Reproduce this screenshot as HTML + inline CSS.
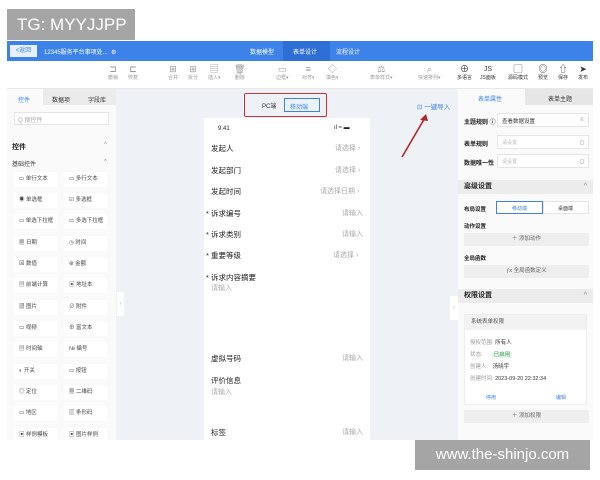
<!DOCTYPE html>
<html><head><meta charset="utf-8"><style>
*{margin:0;padding:0;box-sizing:border-box}
body{width:600px;height:480px;background:#fff;font-family:"Liberation Sans","Noto Sans CJK SC",sans-serif;position:relative;overflow:hidden;color:#333}
.a{position:absolute}
.t{font-size:6px;white-space:nowrap}
.hdr{left:7px;top:41px;width:586px;height:20px;background:#3d82e8}
.tool{left:7px;top:61px;width:586px;height:28px;background:#fff;border-bottom:1px solid #e8e8e8}
.canvas{left:116px;top:89px;width:342px;height:351px;background:#eef1f5}
.lp{left:7px;top:89px;width:109px;height:351px;background:#fafafa}
.rp{left:458px;top:89px;width:135px;height:351px;background:#fafafa}
.item{position:absolute;width:43px;height:15px;background:#fff;font-size:5.5px;color:#444;line-height:15px;padding-left:5px;white-space:nowrap}
.row{font-size:7.5px;color:#222}
.ph{font-size:7px;color:#aaa}
.sec{background:#ececec;height:14px;font-size:7px;font-weight:bold;line-height:14px;padding-left:6px;color:#222}
.btn{background:#eee;height:13px;font-size:5.5px;color:#666;text-align:center;line-height:13px}
.tb span{position:absolute;text-align:center;line-height:9px}
.tb b{font-weight:normal;font-size:9px;display:block}
</style></head><body>
<div class="a" style="left:7px;top:9px;width:128px;height:31px;background:#a5a5a5;color:#fff;font-size:17px;line-height:31px;padding-left:10px">TG: MYYJJPP</div>

<div class="a hdr"></div>
<div class="a t" style="left:10px;top:45px;width:27px;height:12px;background:#e8f0fc;color:#3d82e8;line-height:12px;text-align:center">&lt;返回</div>
<div class="a t" style="left:44px;top:47px;color:#fff">12345服务平台事项处...&nbsp; ⚙</div>
<div class="a t" style="left:250px;top:47px;color:#fff">数据模型</div>
<div class="a" style="left:283px;top:41px;width:47px;height:20px;background:#2e6fd6"></div>
<div class="a t" style="left:293px;top:47px;color:#fff">表单设计</div>
<div class="a t" style="left:336px;top:47px;color:#fff">流程设计</div>

<div class="a tool"></div>
<div class="a tb" style="font-size:5px;color:#999;top:65px;left:0;width:600px;height:22px">
<span style="left:108px"><b>⊐</b>撤销</span><span style="left:128px"><b>⊏</b>恢复</span>
<span style="left:168px"><b>⊞</b>合并</span><span style="left:188px"><b>⊞</b>拆分</span>
<span style="left:208px"><b>▤</b>插入▾</span><span style="left:234px"><b>🗑</b>删除</span>
<span style="left:276px"><b>▭</b>边框▾</span><span style="left:302px"><b>≡</b>对齐▾</span><span style="left:326px"><b>◇</b>填色▾</span>
<span style="left:370px"><b>⚖</b>表单样式▾</span><span style="left:418px"><b>⌕</b>快速排列▾</span>
<span style="left:457px;color:#333"><b>⊕</b>多语言</span><span style="left:480px;color:#333"><b style="font-size:7px">JS</b>JS面板</span>
<span style="left:508px;color:#333"><b>▢</b>源码模式</span><span style="left:538px;color:#333"><b>◎</b>预览</span>
<span style="left:558px;color:#333"><b>⇧</b>保存</span><span style="left:578px;color:#333"><b>➤</b>发布</span>
</div>

<div class="a canvas"></div>
<div class="a lp"></div>
<div class="a" style="left:7px;top:89px;width:109px;height:16px;background:#fafafa"></div>
<div class="a" style="left:43px;top:89px;width:73px;height:16px;background:#ebebeb"></div>
<div class="a t" style="left:18px;top:95px;color:#3d82e8">控件</div>
<div class="a t" style="left:52px;top:95px">数据项</div>
<div class="a t" style="left:88px;top:95px">字段库</div>
<div class="a" style="left:14px;top:112px;width:95px;height:13px;background:#fff;border:1px solid #e5e5e5"></div>
<div class="a t" style="left:18px;top:115px;color:#aaa">Q 搜控件</div>
<div class="a t" style="left:12px;top:142px;font-weight:bold;font-size:7px;color:#222">控件</div>
<div class="a t" style="left:104px;top:142px;color:#888">^</div>
<div class="a t" style="left:12px;top:159px;color:#444">基础控件</div>
<div class="a t" style="left:104px;top:159px;color:#888">^</div>
<div class="a" style="left:0;top:0">
<div class="item" style="left:14px;top:172px">▭ 单行文本</div><div class="item" style="left:64px;top:172px">▭ 多行文本</div>
<div class="item" style="left:14px;top:193px">◉ 单选框</div><div class="item" style="left:64px;top:193px">☑ 多选框</div>
<div class="item" style="left:14px;top:214px">▭ 单选下拉框</div><div class="item" style="left:64px;top:214px">▭ 多选下拉框</div>
<div class="item" style="left:14px;top:236px">▦ 日期</div><div class="item" style="left:64px;top:236px">◷ 时间</div>
<div class="item" style="left:14px;top:257px">⊠ 数值</div><div class="item" style="left:64px;top:257px">⊛ 金额</div>
<div class="item" style="left:14px;top:278px">▤ 前端计算</div><div class="item" style="left:64px;top:278px">▣ 地址本</div>
<div class="item" style="left:14px;top:300px">▨ 图片</div><div class="item" style="left:64px;top:300px">⊘ 附件</div>
<div class="item" style="left:14px;top:321px">▭ 视频</div><div class="item" style="left:64px;top:321px">⊕ 富文本</div>
<div class="item" style="left:14px;top:342px">▤ 时间轴</div><div class="item" style="left:64px;top:342px">№ 编号</div>
<div class="item" style="left:14px;top:364px">◐ 开关</div><div class="item" style="left:64px;top:364px">▭ 按钮</div>
<div class="item" style="left:14px;top:385px">◎ 定位</div><div class="item" style="left:64px;top:385px">▦ 二维码</div>
<div class="item" style="left:14px;top:406px">▭ 地区</div><div class="item" style="left:64px;top:406px">▥ 条形码</div>
<div class="item" style="left:14px;top:428px;height:12px">▣ 样例模板</div><div class="item" style="left:64px;top:428px;height:12px">▣ 图片样例</div>
</div>
<div class="a" style="left:117px;top:292px;width:7px;height:24px;background:#fff;font-size:5px;color:#999;line-height:24px;text-align:center">‹</div>
<div class="a" style="left:450px;top:296px;width:8px;height:24px;background:#fff;font-size:5px;color:#999;line-height:24px;text-align:center">›</div>

<div class="a" style="left:244px;top:93px;width:83px;height:24px;border:1.5px solid #c8333a;border-radius:2px"></div>
<div class="a t" style="left:262px;top:101px;font-size:6px">PC端</div>
<div class="a" style="left:284px;top:98px;width:36px;height:14px;border:1px solid #3d82e8;background:#eaf2fd"></div>
<div class="a t" style="left:290px;top:102px;color:#3d82e8">移动端</div>
<div class="a t" style="left:417px;top:101px;color:#3d82e8;font-size:6.5px">⊡ 一键导入</div>
<svg class="a" style="left:395px;top:110px" width="40" height="50"><path d="M7 47 L31 6" stroke="#b3262b" stroke-width="1.6"/><path d="M31 4 L25 10 L33 11 Z" fill="#b3262b"/></svg>

<div class="a" style="left:204px;top:118px;width:166px;height:322px;background:#fff"></div>
<div class="a t" style="left:218px;top:126px;font-size:6px;color:#222">9:41</div>
<div class="a t" style="left:334px;top:125px;font-size:6px;color:#222">ıl ≈ ▬</div>
<div class="a row t" style="left:211px;top:143px">发起人</div><div class="a ph t" style="left:335px;top:143px">请选择 ›</div>
<div class="a row t" style="left:211px;top:165px">发起部门</div><div class="a ph t" style="left:335px;top:165px">请选择 ›</div>
<div class="a row t" style="left:211px;top:186px">发起时间</div><div class="a ph t" style="left:320px;top:186px">请选择日期 ›</div>
<div class="a row t" style="left:206px;top:208px">* 诉求编号</div><div class="a ph t" style="left:342px;top:208px">请输入</div>
<div class="a row t" style="left:206px;top:229px">* 诉求类别</div><div class="a ph t" style="left:342px;top:229px">请输入</div>
<div class="a row t" style="left:206px;top:250px">* 重要等级</div><div class="a ph t" style="left:333px;top:250px">请选择 ›</div>
<div class="a row t" style="left:206px;top:272px">* 诉求内容摘要</div><div class="a ph t" style="left:211px;top:283px">请输入</div>
<div class="a row t" style="left:211px;top:353px">虚拟号码</div><div class="a ph t" style="left:342px;top:353px">请输入</div>
<div class="a row t" style="left:211px;top:375px">评价信息</div><div class="a ph t" style="left:211px;top:387px">请输入</div>
<div class="a row t" style="left:211px;top:427px">标签</div><div class="a ph t" style="left:342px;top:427px">请输入</div>

<div class="a rp"></div>
<div class="a" style="left:525px;top:89px;width:68px;height:16px;background:#e6e6e6"></div>
<div class="a t" style="left:478px;top:94px;color:#3d82e8">表单属性</div>
<div class="a t" style="left:548px;top:94px;color:#333">表单主题</div>
<div class="a t" style="left:464px;top:117px;font-weight:bold;color:#222">主题规则 ⓘ</div>
<div class="a" style="left:497px;top:113px;width:92px;height:14px;background:#fff;border:1px solid #e5e5e5"></div>
<div class="a t" style="left:502px;top:117px;font-size:5.5px">查看数据设置</div><div class="a t" style="left:580px;top:117px;color:#999">≡</div>
<div class="a t" style="left:464px;top:139px;font-weight:bold;color:#222">表单规则</div>
<div class="a" style="left:497px;top:135px;width:92px;height:14px;background:#fff;border:1px solid #e5e5e5"></div>
<div class="a t" style="left:502px;top:139px;color:#bbb;font-size:5px">请设置</div><div class="a t" style="left:579px;top:138px;color:#999">⊙</div>
<div class="a t" style="left:464px;top:158px;font-weight:bold;color:#222">数据唯一性</div>
<div class="a" style="left:497px;top:154px;width:92px;height:14px;background:#fff;border:1px solid #e5e5e5"></div>
<div class="a t" style="left:502px;top:158px;color:#bbb;font-size:5px">请设置</div><div class="a t" style="left:579px;top:157px;color:#999">⊙</div>
<div class="a sec" style="left:458px;top:180px;width:135px">高级设置<span style="float:right;margin-right:6px;color:#888;font-weight:normal">^</span></div>
<div class="a t" style="left:464px;top:205px;font-weight:bold;color:#222;font-size:5.5px">布局设置</div>
<div class="a" style="left:496px;top:201px;width:47px;height:13px;background:#fff;border:1px solid #3d82e8"></div>
<div class="a t" style="left:512px;top:205px;color:#3d82e8;font-size:5px">移动端</div>
<div class="a" style="left:543px;top:201px;width:46px;height:13px;background:#fff;border:1px solid #e5e5e5"></div>
<div class="a t" style="left:558px;top:205px;font-size:5px">桌面端</div>
<div class="a t" style="left:464px;top:222px;font-weight:bold;color:#222;font-size:5.5px">动作设置</div>
<div class="a btn" style="left:464px;top:233px;width:125px">＋ 添加动作</div>
<div class="a t" style="left:464px;top:254px;font-weight:bold;color:#222;font-size:5.5px">全局函数</div>
<div class="a btn" style="left:464px;top:265px;width:125px">ƒx 全局函数定义</div>
<div class="a sec" style="left:458px;top:289px;width:135px">权限设置<span style="float:right;margin-right:6px;color:#888;font-weight:normal">^</span></div>
<div class="a" style="left:464px;top:314px;width:123px;height:91px;background:#fff;border:1px solid #eee"></div>
<div class="a" style="left:465px;top:315px;width:121px;height:15px;background:#f2f2f2;font-size:5.5px;line-height:15px;padding-left:6px;color:#555">系统表单权限</div>
<div class="a" style="left:470px;top:337px;font-size:5.5px;line-height:12px;color:#999;white-space:nowrap">授权范围: <span style="color:#333">所有人</span><br>状态: &nbsp;&nbsp;&nbsp;&nbsp;&nbsp;<span style="color:#3a9a5a;background:#e6f5ea;padding:0 2px">已启用</span><br>创建人: &nbsp;&nbsp;<span style="color:#333">汤晓宇</span><br>创建时间: <span style="color:#333">2023-09-20 22:32:34</span></div>
<div class="a t" style="left:486px;top:394px;color:#3d82e8;font-size:5px">停用</div>
<div class="a t" style="left:556px;top:394px;color:#3d82e8;font-size:5px">编辑</div>
<div class="a btn" style="left:464px;top:410px;width:125px">＋ 添加权限</div>

<div class="a" style="left:415px;top:440px;width:175px;height:30px;background:#a5a5a5;color:#fff;font-size:15px;line-height:30px;text-align:center">www.the-shinjo.com</div>
</body></html>
